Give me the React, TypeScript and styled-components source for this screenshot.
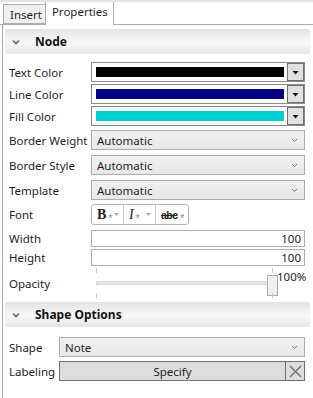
import React from "react";
import styled, { createGlobalStyle } from "styled-components";

const Global = createGlobalStyle`
  html, body { margin: 0; padding: 0; background: #fff; }
  body { font-family: "Noto Sans", "Open Sans", sans-serif; font-size: 11.5px; color: #1e1e1e; }
`;

const Root = styled.div`
  width: 313px;
  height: 398px;
  overflow: hidden;
  background: #fff;
  display: flex;
  flex-direction: column;
  border-top: 2px solid #e3e3e3;
  box-sizing: border-box;
`;

const TabStrip = styled.div`
  display: flex;
  align-items: flex-end;
  height: 22px;
  padding-left: 3px;
  border-bottom: 1px solid #acacac;
`;

const Tab = styled.div<{ $active?: boolean }>`
  box-sizing: border-box;
  height: ${(p) => (p.$active ? "24px" : "20px")};
  margin-bottom: ${(p) => (p.$active ? "-1px" : "0")};
  padding: ${(p) => (p.$active ? "2px 5px 0 6px" : "2px 3px 0 6px")};
  background: ${(p) => (p.$active ? "#fff" : "#f0f0f0")};
  border: 1px solid #acacac;
  border-bottom: ${(p) => (p.$active ? "none" : "1px solid #acacac")};
  border-right: ${(p) => (p.$active ? "1px solid #acacac" : "none")};
  font-size: 11.5px;
  line-height: 16px;
  color: #1e1e1e;
`;

const Panel = styled.div`
  flex: 1;
  margin-left: 2px;
  border-left: 1px solid #acacac;
  padding: 4px 3px 0 2px;
  display: flex;
  flex-direction: column;
`;

const SectionHeader = styled.div`
  height: 25px;
  display: flex;
  align-items: center;
  border-radius: 2px;
  background: linear-gradient(#e4e4e4, #f8f8f8 55%, #e6e6e6);
  font-weight: bold;
  font-size: 12px;
  color: #111;
`;

const Chevron = styled.svg`
  width: 8px;
  height: 6px;
  margin: 1px 15px 0 7px;
`;

const Rows = styled.div<{ $labelW: number; $ctrlW: number }>`
  display: grid;
  grid-template-columns: ${(p) => p.$labelW}px ${(p) => p.$ctrlW}px;
  padding-left: 4px;
  align-items: center;
`;

const Label = styled.div<{ $h: number; $mt?: number }>`
  height: ${(p) => p.$h}px;
  margin-top: ${(p) => p.$mt ?? 0}px;
  display: flex;
  align-items: center;
  font-size: 11.5px;
  color: #1e1e1e;
  white-space: nowrap;
`;

const Cell = styled.div<{ $h: number; $mt?: number }>`
  height: ${(p) => p.$h}px;
  margin-top: ${(p) => p.$mt ?? 0}px;
  display: flex;
  align-items: center;
  position: relative;
`;

const ColorBox = styled.div`
  box-sizing: border-box;
  width: 100%;
  height: 20px;
  border: 1px solid #8c8c8c;
  background: #fff;
  display: flex;
  align-items: center;
  padding-left: 4px;
`;

const Swatch = styled.div<{ $c: string }>`
  flex: 1;
  height: 10px;
  background: ${(p) => p.$c};
  margin-right: 3px;
`;

const DropBtn = styled.div`
  box-sizing: border-box;
  width: 17px;
  height: 18px;
  border: 1px solid #707070;
  background: #e1e1e1;
  display: flex;
  align-items: center;
  justify-content: center;
`;

const Combo = styled.div`
  box-sizing: border-box;
  width: 100%;
  height: 20px;
  border: 1px solid #acacac;
  background: linear-gradient(#f0f0f0, #e8e8e8);
  display: flex;
  align-items: center;
  justify-content: space-between;
  padding: 0 6px 0 5px;
  font-size: 11.5px;
  color: #1e1e1e;
`;

const FontGroup = styled.div`
  box-sizing: border-box;
  height: 21px;
  display: flex;
  border: 1px solid #b5b5b5;
  border-radius: 3px;
  background: #fff;
`;

const FontBtn = styled.div<{ $last?: boolean }>`
  width: 32px;
  display: flex;
  align-items: center;
  justify-content: space-between;
  padding: 0 4px 0 5px;
  box-sizing: border-box;
  border-right: ${(p) => (p.$last ? "none" : "1px solid #d0d0d0")};
`;

const Glyph = styled.span<{ $kind: "b" | "i" | "s" }>`
  position: relative;
  font-family: ${(p) => (p.$kind === "s" ? '"Liberation Sans", sans-serif' : '"Liberation Serif", serif')};
  font-weight: ${(p) => (p.$kind === "i" ? "normal" : "bold")};
  font-style: ${(p) => (p.$kind === "i" ? "italic" : "normal")};
  font-size: ${(p) => (p.$kind === "s" ? "10.5px" : "14px")};
  text-decoration: ${(p) => (p.$kind === "s" ? "line-through" : "none")};
  letter-spacing: ${(p) => (p.$kind === "s" ? "-0.5px" : "0")};
  color: #222;
  line-height: 14px;
  margin-right: 5px;
`;

const Star = styled.span`
  position: absolute;
  right: -6px;
  bottom: -4px;
  font-size: 10px;
  color: #8a8a8a;
  font-family: "Liberation Sans", sans-serif;
  font-style: normal;
  font-weight: normal;
  text-decoration: none;
`;

const Input = styled.div`
  box-sizing: border-box;
  width: 100%;
  height: 17px;
  border: 1px solid #abadb3;
  background: #fff;
  text-align: right;
  padding-right: 3px;
  font-size: 11.5px;
  line-height: 15px;
  color: #1e1e1e;
`;

const SliderWrap = styled.div`
  position: relative;
  width: 100%;
  height: 30px;
`;

const Tick = styled.div<{ $x: number; $top: number }>`
  position: absolute;
  left: ${(p) => p.$x}px;
  top: ${(p) => p.$top}px;
  width: 1px;
  height: 5px;
  background: #c4c4c4;
`;

const Track = styled.div`
  position: absolute;
  left: 5px;
  top: 13px;
  width: 180px;
  height: 4px;
  box-sizing: border-box;
  background: #e7eaea;
  border: 1px solid #d6d6d6;
`;

const Thumb = styled.div`
  position: absolute;
  left: 176px;
  top: 7px;
  width: 11px;
  height: 21px;
  box-sizing: border-box;
  background: #f0f0f0;
  border: 1px solid #acacac;
`;

const Pct = styled.div`
  position: absolute;
  left: 186px;
  top: 2px;
  font-size: 11.5px;
  color: #1e1e1e;
  line-height: 14px;
`;

const SpecifyBtn = styled.div`
  box-sizing: border-box;
  flex: 1;
  height: 20px;
  border: 1px solid #707070;
  background: #dddddd;
  display: flex;
  align-items: center;
  justify-content: center;
  font-size: 11.5px;
  color: #1e1e1e;
`;

const ClearBtn = styled.div`
  box-sizing: border-box;
  width: 19px;
  height: 20px;
  border: 1px solid #707070;
  border-left: none;
  background: #dddddd;
  display: flex;
  align-items: center;
  justify-content: center;
`;

const Spacer = styled.div<{ $h: number }>`
  height: ${(p) => p.$h}px;
`;

const ChevronIcon = () => (
  <Chevron viewBox="0 0 8 6">
    <path d="M1 1.5 L4 4.5 L7 1.5" stroke="#666" strokeWidth="1.6" fill="none" />
  </Chevron>
);

const SmallDown = ({ color = "#777" }: { color?: string }) => (
  <svg width="7" height="5" viewBox="0 0 7 5">
    <path d="M1 1 L3.5 3.5 L6 1" stroke={color} strokeWidth="1" fill="none" />
  </svg>
);

const Tri = () => (
  <svg width="7" height="5" viewBox="0 0 7 5">
    <path d="M0.5 1 H6.5 L3.5 4.5 Z" fill="#111" />
  </svg>
);

const MiniTri = () => (
  <svg width="5" height="3" viewBox="0 0 5 3">
    <path d="M0 0 H5 L2.5 3 Z" fill="#aaa" />
  </svg>
);

const colorRows = [
  { label: "Text Color", color: "#000000" },
  { label: "Line Color", color: "#000080" },
  { label: "Fill Color", color: "#00ced1" },
];

const comboRows = ["Border Weight", "Border Style", "Template"];

export default function App() {
  return (
    <Root>
      <Global />
      <TabStrip>
        <Tab>Insert</Tab>
        <Tab $active>Properties</Tab>
      </TabStrip>
      <Panel>
        <SectionHeader>
          <ChevronIcon />
          Node
        </SectionHeader>
        <Spacer $h={8} />
        <Rows $labelW={82} $ctrlW={214}>
          {colorRows.map((r, i) => (
            <React.Fragment key={r.label}>
              <Label $h={20} $mt={i ? 2 : 0}>{r.label}</Label>
              <Cell $h={20} $mt={i ? 2 : 0}>
                <ColorBox>
                  <Swatch $c={r.color} />
                  <DropBtn>
                    <Tri />
                  </DropBtn>
                </ColorBox>
              </Cell>
            </React.Fragment>
          ))}
          {comboRows.map((l, i) => (
            <React.Fragment key={l}>
              <Label $h={20} $mt={i ? 5 : 4}>{l}</Label>
              <Cell $h={20} $mt={i ? 5 : 4}>
                <Combo>
                  Automatic
                  <SmallDown />
                </Combo>
              </Cell>
            </React.Fragment>
          ))}
          <Label $h={21} $mt={4}>Font</Label>
          <Cell $h={21} $mt={4}>
            <FontGroup>
              <FontBtn>
                <Glyph $kind="b">
                  B<Star>*</Star>
                </Glyph>
                <MiniTri />
              </FontBtn>
              <FontBtn>
                <Glyph $kind="i">
                  I<Star>*</Star>
                </Glyph>
                <MiniTri />
              </FontBtn>
              <FontBtn $last>
                <Glyph $kind="s">
                  abc<Star>*</Star>
                </Glyph>
                <MiniTri />
              </FontBtn>
            </FontGroup>
          </Cell>
          <Label $h={17} $mt={5}>Width</Label>
          <Cell $h={17} $mt={5}>
            <Input>100</Input>
          </Cell>
          <Label $h={17} $mt={2}>Height</Label>
          <Cell $h={17} $mt={2}>
            <Input>100</Input>
          </Cell>
          <Label $h={30} $mt={2}>Opacity</Label>
          <Cell $h={30} $mt={2}>
            <SliderWrap>
              <Tick $x={5} $top={0} />
              <Tick $x={181} $top={0} />
              <Track />
              <Thumb />
              <Tick $x={5} $top={25} />
              <Tick $x={181} $top={25} />
              <Pct>100%</Pct>
            </SliderWrap>
          </Cell>
        </Rows>
        <Spacer $h={4} />
        <SectionHeader>
          <ChevronIcon />
          Shape Options
        </SectionHeader>
        <Spacer $h={10} />
        <Rows $labelW={50} $ctrlW={246}>
          <Label $h={20}>Shape</Label>
          <Cell $h={20}>
            <Combo>
              Note
              <SmallDown />
            </Combo>
          </Cell>
          <Label $h={20} $mt={4}>Labeling</Label>
          <Cell $h={20} $mt={4}>
            <SpecifyBtn>Specify</SpecifyBtn>
            <ClearBtn>
              <svg width="13" height="13" viewBox="0 0 13 13">
                <path d="M1 1 L12 12 M12 1 L1 12" stroke="#777" strokeWidth="1.6" />
              </svg>
            </ClearBtn>
          </Cell>
        </Rows>
      </Panel>
    </Root>
  );
}
